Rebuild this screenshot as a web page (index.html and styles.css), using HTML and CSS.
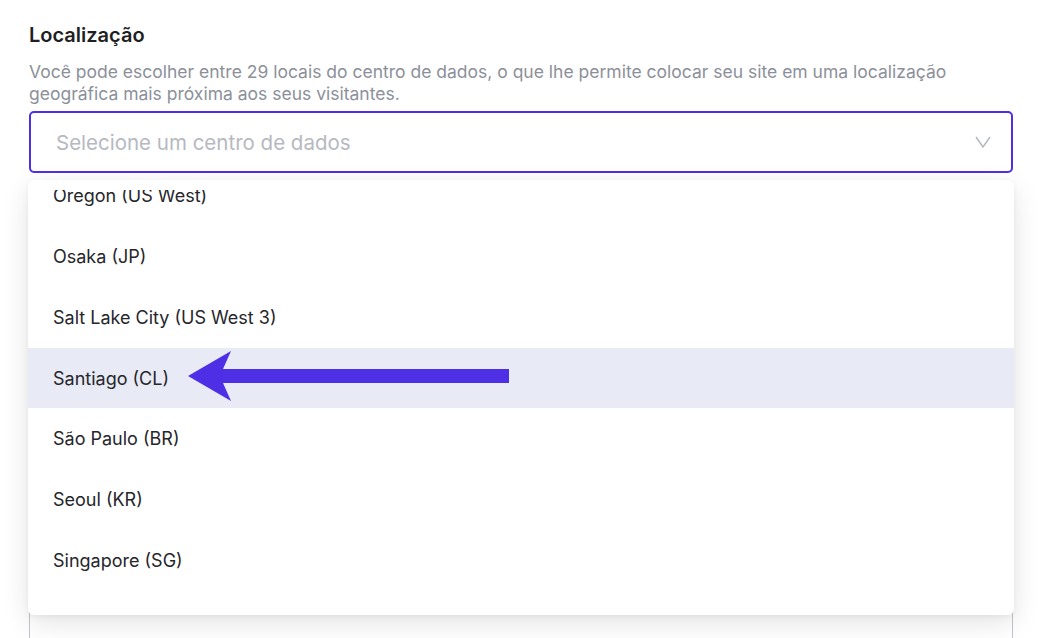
FILE: index.html
```html
<!DOCTYPE html>
<html lang="pt-BR">
<head>
    <meta charset="UTF-8">
    <meta name="viewport" content="width=device-width, initial-scale=1.0">
    <title>Localização</title>
    <link rel="stylesheet" href="styles.css">
</head>
<body>
    <div class="field">
        <h2 class="field-title">Localização</h2>
        <p class="field-help">Você pode escolher entre 29 locais do centro de dados, o que lhe permite colocar seu site em uma localização geográfica mais próxima aos seus visitantes.</p>
        <div class="select-wrap">
            <div class="select-box">
                <span class="placeholder">Selecione um centro de dados</span>
                <svg class="chevron" width="16" height="12" viewBox="0 0 16 12">
                    <polyline points="1,1 8,11 15,1" fill="none" stroke="#b3b6bd" stroke-width="1.4"/>
                </svg>
            </div>
            <div class="dropdown">
                <div class="dropdown-scroll">
                    <ul class="options">
                        <li>Oregon (US West)</li>
                        <li>Osaka (JP)</li>
                        <li>Salt Lake City (US West 3)</li>
                        <li class="active">
                            Santiago (CL)
                            <!-- pointer arrow -->
                            <svg class="pointer" width="323" height="52" viewBox="0 0 323 52">
                                <polygon points="0,25 43,0 35,18 321,18 321,32 35,32 43,50" fill="#4f2fe6"/>
                            </svg>
                        </li>
                        <li>São Paulo (BR)</li>
                        <li>Seoul (KR)</li>
                        <li>Singapore (SG)</li>
                    </ul>
                </div>
            </div>
        </div>
        <div class="next-box"></div>
    </div>
</body>
</html>
```

FILE: styles.css
```css
body {
    margin: 0;
    padding: 22px 33px 0 29px;
    background: #fff;
    font-family: Inter, Roboto, "Liberation Sans", sans-serif;
    color: #222;
    overflow: hidden;
}
.field-title {
    margin: 0;
    font-size: 20px;
    font-weight: 600;
    line-height: 26px;
    color: #1f1f24;
}
.field-help {
    margin: 13px 0 6px;
    font-size: 17.5px;
    line-height: 22px;
    color: #8c909a;
}
.select-wrap {
    position: relative;
}
.select-box {
    height: 58px;
    border: 2px solid #4b30e6;
    border-radius: 5px;
    display: flex;
    align-items: center;
    justify-content: space-between;
    padding: 0 20px 0 25px;
}
.placeholder {
    font-size: 20.5px;
    color: #b6b9c0;
}
.chevron {
    display: block;
}
.dropdown {
    position: absolute;
    top: 69px;
    left: -1px;
    right: -1px;
    height: 435px;
    padding-top: 10px;
    box-sizing: border-box;
    background: #fff;
    border-radius: 6px;
    overflow: hidden;
    box-shadow: 0 8px 28px rgba(0, 0, 0, 0.11), 0 2px 6px rgba(0, 0, 0, 0.05);
    z-index: 2;
}
.dropdown-scroll {
    height: 100%;
    overflow: hidden;
}
.options {
    list-style: none;
    margin: -25px 0 0;
    padding: 0;
}
.options li {
    height: 61px;
    display: flex;
    align-items: center;
    padding-left: 25px;
    font-size: 18px;
    color: #26262b;
}
.options li.active {
    height: 60px;
    background: #e8eaf5;
}
.pointer {
    margin-left: 19px;
    margin-top: -2px;
}
.next-box {
    margin-top: 415px;
    height: 49px;
    border: 1px solid #c3c5cc;
    border-bottom: 0;
    border-radius: 5px 5px 0 0;
}
```
